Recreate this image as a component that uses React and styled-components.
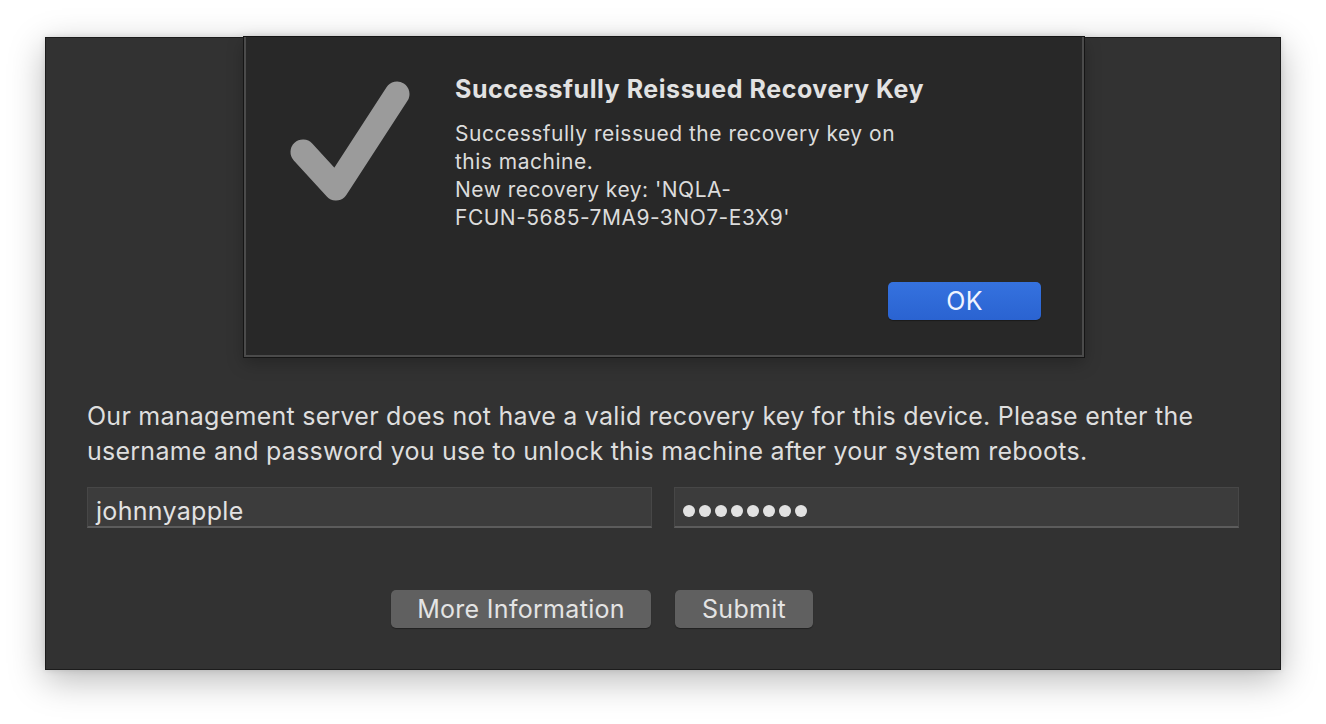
import React from 'react'
import styled, { createGlobalStyle } from 'styled-components'

const GlobalStyle = createGlobalStyle`
  html, body {
    margin: 0;
    padding: 0;
    background: #ffffff;
  }
  body {
    font-family: Inter, "Liberation Sans", sans-serif;
    -webkit-font-smoothing: antialiased;
  }
`

const CheckMark = () => (
  <svg width="140" height="140" viewBox="0 0 140 140">
    <path
      d="M22 80 L55 116 L116 22"
      fill="none"
      stroke="#9b9b9b"
      strokeWidth="25"
      strokeLinecap="round"
      strokeLinejoin="round"
    />
  </svg>
)

const App = () => {
  return (
    <Page>
      <GlobalStyle />
      <Window>
        <Sheet>
          <IconSlot>
            <CheckMark />
          </IconSlot>
          <SheetBody>
            <SheetTitle>Successfully Reissued Recovery Key</SheetTitle>
            <SheetText>
              <Line>Successfully reissued the recovery key on</Line>
              <Line>this machine.</Line>
              <Line>New recovery key: 'NQLA-</Line>
              <Line>FCUN-5685-7MA9-3NO7-E3X9'</Line>
            </SheetText>
            <SheetActions>
              <Button primary width="153px">OK</Button>
            </SheetActions>
          </SheetBody>
        </Sheet>

        <Content>
          <Message>
            Our management server does not have a valid recovery key for this device. Please enter the
            username and password you use to unlock this machine after your system reboots.
          </Message>
          <Fields>
            <Field>johnnyapple</Field>
            <Field>
              {Array.from({ length: 8 }).map((_, i) => (
                <Dot key={i} />
              ))}
            </Field>
          </Fields>
          <Actions>
            <Button width="260px">More Information</Button>
            <Button width="138px">Submit</Button>
          </Actions>
        </Content>
      </Window>
    </Page>
  )
}

const Page = styled.div`
  width: 1326px;
  height: 724px;
  padding: 37px 0 0 45px;
  box-sizing: border-box;
  overflow: hidden;
`
const Window = styled.div`
  width: 1236px;
  height: 633px;
  box-sizing: border-box;
  background: #323232;
  border: 1px solid #1c1c1c;
  box-shadow: 0 10px 34px rgba(0, 0, 0, 0.28), 0 0 6px rgba(0, 0, 0, 0.12);
  display: flex;
  flex-direction: column;
  align-items: stretch;
`
const Sheet = styled.div`
  align-self: center;
  width: 840px;
  height: 320px;
  box-sizing: border-box;
  margin: -1px 0 0 2px;
  background: #282828;
  border: 2px solid #4b4b4b;
  border-top: none;
  box-shadow: 0 0 0 1px #151515, 0 6px 16px rgba(0, 0, 0, 0.25);
  display: flex;
  padding: 0 41px 0 35px;
`
const IconSlot = styled.div`
  width: 140px;
  padding-top: 35px;
  margin-right: 34px;
  flex-shrink: 0;
`
const SheetBody = styled.div`
  flex: 1;
  display: flex;
  flex-direction: column;
  padding-top: 36px;
`
const SheetTitle = styled.div`
  font-size: 25px;
  font-weight: 700;
  letter-spacing: 0.55px;
  color: #e2e2e2;
  line-height: 32px;
  white-space: nowrap;
`
const SheetText = styled.div`
  margin-top: 15px;
  font-size: 21px;
  letter-spacing: 0.5px;
  line-height: 28px;
  color: #dcdcdc;
`
const Line = styled.div`
  white-space: nowrap;
`
const SheetActions = styled.div`
  margin-top: auto;
  margin-bottom: 35px;
  display: flex;
  justify-content: flex-end;
`
const Content = styled.div`
  padding: 0 41px;
  display: flex;
  flex-direction: column;
`
const Message = styled.p`
  margin: 42px 0 0;
  font-size: 25px;
  letter-spacing: 0.25px;
  line-height: 35px;
  color: #dedede;
`
const Fields = styled.div`
  margin-top: 18px;
  display: grid;
  grid-template-columns: 1fr 1fr;
  column-gap: 22px;
`
const Field = styled.div`
  height: 41px;
  box-sizing: border-box;
  background: #3c3c3c;
  border: 1px solid #474747;
  border-bottom: 2px solid #5c5c5c;
  padding: 7px 7px 0 8px;
  display: flex;
  align-items: center;
  gap: 4px;
  font-size: 25px;
  letter-spacing: 0.3px;
  color: #e2e2e2;
`
const Dot = styled.span`
  width: 12px;
  height: 12px;
  border-radius: 50%;
  background: #e2e2e2;
  flex-shrink: 0;
`
const Actions = styled.div`
  margin-top: 62px;
  padding-left: 304px;
  display: flex;
  gap: 24px;
`
const Button = styled.div`
  width: ${(props) => props.width};
  height: 38px;
  box-sizing: border-box;
  border-radius: 5px;
  background: ${(props) =>
    props.primary ? 'linear-gradient(#3572df, #2a63d1)' : '#606060'};
  box-shadow: 0 1px 1px rgba(0, 0, 0, 0.35);
  display: flex;
  align-items: center;
  justify-content: center;
  font-size: 25px;
  letter-spacing: 0.3px;
  color: ${(props) => (props.primary ? '#f0f4ff' : '#e4e4e4')};
`

export default App
